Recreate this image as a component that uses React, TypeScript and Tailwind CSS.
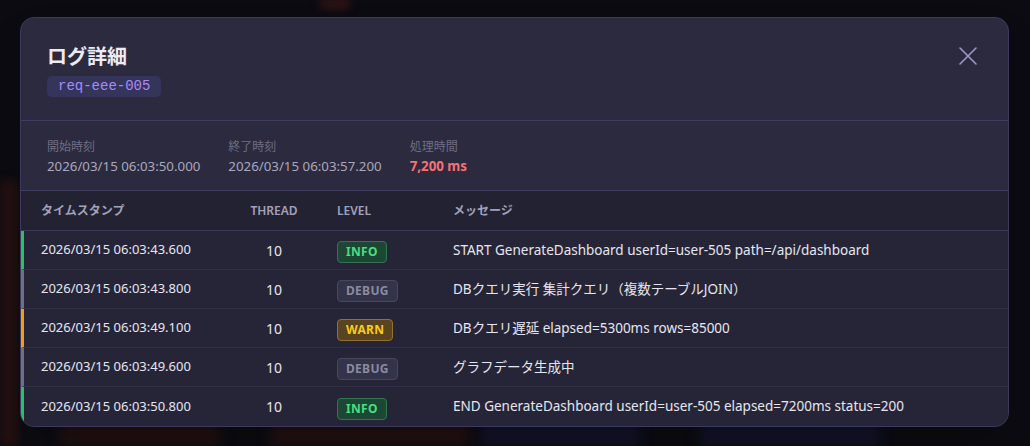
import React from "react";

type Level = "INFO" | "DEBUG" | "WARN";

interface LogRow {
  ts: string;
  thread: string;
  level: Level;
  message: string;
}

const rows: LogRow[] = [
  { ts: "2026/03/15 06:03:43.600", thread: "10", level: "INFO", message: "START GenerateDashboard userId=user-505 path=/api/dashboard" },
  { ts: "2026/03/15 06:03:43.800", thread: "10", level: "DEBUG", message: "DBクエリ実行 集計クエリ（複数テーブルJOIN）" },
  { ts: "2026/03/15 06:03:49.100", thread: "10", level: "WARN", message: "DBクエリ遅延 elapsed=5300ms rows=85000" },
  { ts: "2026/03/15 06:03:49.600", thread: "10", level: "DEBUG", message: "グラフデータ生成中" },
  { ts: "2026/03/15 06:03:50.800", thread: "10", level: "INFO", message: "END GenerateDashboard userId=user-505 elapsed=7200ms status=200" },
];

const rowBorder: Record<Level, string> = {
  INFO: "border-l-[#22c55e]",
  DEBUG: "border-l-[#6b7280]",
  WARN: "border-l-[#f59e0b]",
};

const badgeStyle: Record<Level, string> = {
  INFO: "bg-[#1d4634] border-[#2b7a4f] text-[#4ade80]",
  DEBUG: "bg-[#33334a] border-[#47475e] text-[#8b8b9f]",
  WARN: "bg-[#5a4420] border-[#95712f] text-[#facc15]",
};

function LevelBadge({ level }: { level: Level }) {
  return (
    <span
      className={`inline-flex h-[22px] items-center rounded-[4px] border px-[8px] text-[12px] font-bold tracking-wide ${badgeStyle[level]}`}
    >
      {level}
    </span>
  );
}

export default function App() {
  return (
    <div
      className="relative h-[446px] w-full overflow-hidden bg-[#0b0b11] pl-[20px] pt-[17px]"
      style={{ fontFamily: '"Noto Sans", "Noto Sans CJK JP", sans-serif' }}
    >
      {/* blurred page behind the modal */}
      <div className="pointer-events-none absolute inset-0">
        <div className="absolute left-0 top-[180px] h-[266px] w-[18px] bg-[#241010] blur-[4px]" />
        <div className="absolute bottom-0 left-[60px] h-[22px] w-[160px] bg-[#221111] blur-[6px]" />
        <div className="absolute bottom-0 left-[270px] h-[22px] w-[200px] bg-[#231111] blur-[6px]" />
        <div className="absolute bottom-0 left-[480px] h-[22px] w-[160px] bg-[#12132a] blur-[6px]" />
        <div className="absolute bottom-0 left-[700px] h-[22px] w-[180px] bg-[#12132a] blur-[6px]" />
        <div className="absolute left-[320px] top-0 h-[8px] w-[30px] bg-[#3a1616] blur-[4px]" />
      </div>

      <div className="relative w-[989px] overflow-hidden rounded-[14px] border border-[#3b3a5e] bg-[#2b2a3e] shadow-2xl">
        {/* header */}
        <div className="flex h-[103px] items-start justify-between border-b border-[#3e3d63] pl-[26px] pr-[30px] pt-[26px]">
          <div className="flex flex-col items-start">
            <h2 className="text-[20px] font-bold leading-[26px] text-[#ecebf5]">ログ詳細</h2>
            <span
              className="mt-[6px] rounded-[5px] bg-[#35345a] px-[11px] py-[2px] text-[14px] leading-[17px] text-[#a78bfa]"
              style={{ fontFamily: '"Liberation Mono", monospace' }}
            >
              req-eee-005
            </span>
          </div>
          <button className="mt-[2px] text-[#9d9bc4]">
            <svg width="20" height="20" viewBox="0 0 20 20" fill="none" stroke="currentColor" strokeWidth="1.6" strokeLinecap="round">
              <path d="M2 2 L18 18 M18 2 L2 18" />
            </svg>
          </button>
        </div>

        {/* info */}
        <div className="flex h-[70px] items-start gap-[28px] border-b border-[#3e3d63] pl-[26px] pt-[17px]">
          <div className="flex flex-col">
            <span className="text-[12px] leading-[18px] text-[#6f6e84]">開始時刻</span>
            <span className="text-[13.3px] leading-[20px] text-[#a9a8bf]">2026/03/15 06:03:50.000</span>
          </div>
          <div className="flex flex-col">
            <span className="text-[12px] leading-[18px] text-[#6f6e84]">終了時刻</span>
            <span className="text-[13.3px] leading-[20px] text-[#a9a8bf]">2026/03/15 06:03:57.200</span>
          </div>
          <div className="flex flex-col">
            <span className="text-[12px] leading-[18px] text-[#6f6e84]">処理時間</span>
            <span className="text-[13.3px] font-bold leading-[20px] text-[#f87171]">7,200 ms</span>
          </div>
        </div>

        {/* table */}
        <div className="flex flex-col">
          <div className="flex h-[40px] items-center border-b border-[#3a3958] bg-[#232232] text-[12px] font-semibold text-[#a2a1ba]">
            <div className="w-[210px] pl-[20px]">タイムスタンプ</div>
            <div className="w-[86px] text-center">THREAD</div>
            <div className="w-[136px] pl-[20px]">LEVEL</div>
            <div className="flex-1">メッセージ</div>
          </div>
          {rows.map((r, i) => (
            <div
              key={i}
              className={`flex h-[39px] items-center border-l-[3px] bg-[#262537] ${rowBorder[r.level]} ${
                i < rows.length - 1 ? "border-b border-b-[#313046]" : ""
              }`}
            >
              <div className="w-[207px] pl-[17px] text-[13px] text-[#e6e5f0]">{r.ts}</div>
              <div className="w-[86px] text-center text-[14px] text-[#e6e5f0]">{r.thread}</div>
              <div className="w-[136px] pl-[20px] pt-[1px]">
                <LevelBadge level={r.level} />
              </div>
              <div className="flex-1 text-[13.5px] text-[#e6e5f0]">{r.message}</div>
            </div>
          ))}
        </div>
      </div>
    </div>
  );
}
